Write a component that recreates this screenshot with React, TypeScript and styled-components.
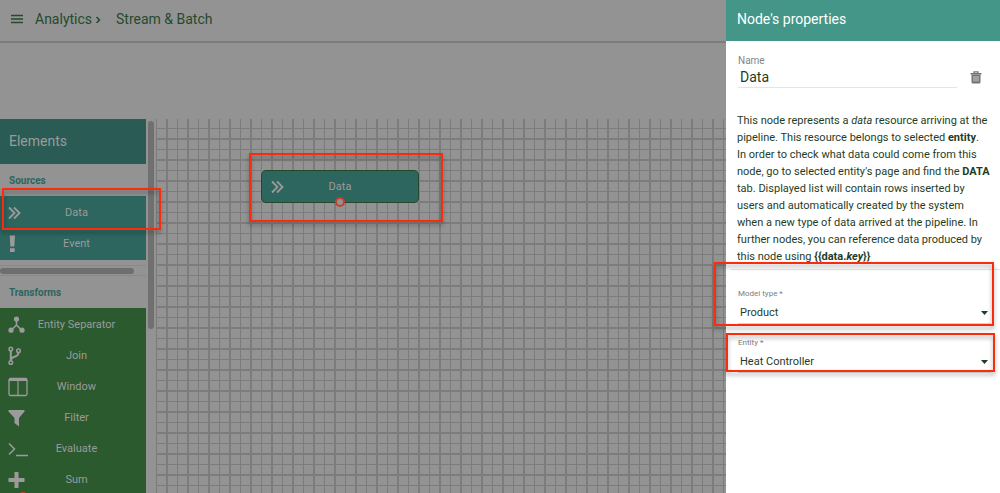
import React, { useState } from "react";
import styled, { createGlobalStyle } from "styled-components";

const GlobalStyle = createGlobalStyle`
  *, *::before, *::after { box-sizing: border-box; }
  body { margin: 0; font-family: Roboto, "Noto Sans", sans-serif; color: #1f3d25; background: #939393; }
  button, input, select { font: inherit; color: inherit; margin: 0; }
  h1, h2, h3, p { margin: 0; font-weight: 400; }
`;

const Shell = styled.div`
  position: relative;
  display: flex;
  flex-direction: column;
  height: 100vh;
  overflow: hidden;
  background: #939393;
`;

const TopBar = styled.header`
  display: flex;
  align-items: center;
  flex: none;
  height: 43px;
  padding: 0 11px 4px;
  border-bottom: 2px solid #7d7d7d;
  color: #264a2c;
`;

const MenuButton = styled.button`
  display: flex;
  padding: 0;
  margin-right: 12px;
  border: 0;
  background: none;
`;

const Crumb = styled.a`
  display: flex;
  align-items: center;
  gap: 3px;
  margin-right: 15px;
  font-size: 14px;
  line-height: 20px;
  color: inherit;
  text-decoration: none;
`;

const PageTitle = styled.h1`
  font-size: 14px;
  line-height: 20px;
`;

const Workspace = styled.main`
  display: flex;
  flex: 1;
  min-height: 0;
  margin-top: 76px;
`;

const Palette = styled.aside`
  display: flex;
  flex: none;
  width: 156px;
  overflow: hidden;
`;

const PaletteBody = styled.div`
  flex: none;
  width: 146px;
`;

const PaletteTitle = styled.h2`
  height: 45px;
  padding-left: 9px;
  font-size: 14px;
  line-height: 45px;
  color: #9b9b9b;
  background: #2a5c55;
`;

const GroupTitle = styled.h3`
  height: 32px;
  padding-left: 9px;
  font-size: 10px;
  font-weight: 700;
  line-height: 33px;
  color: #2b655c;
`;

const GroupItems = styled.div<{ $color: string }>`
  display: flex;
  flex-direction: column;
  padding: 1px 0;
  background: ${(p) => p.$color};
`;

const ElementButton = styled.button`
  display: grid;
  grid-template-columns: 22px 1fr 23px;
  align-items: center;
  height: 31px;
  padding: 0 0 0 8px;
  border: 0;
  background: none;
  color: #9b9b9b;
  font-size: 11px;
  line-height: 16px;
  text-align: center;
  white-space: nowrap;

  svg { display: block; }
`;

const HorizontalTrack = styled.div`
  height: 11px;
  margin-top: 5px;
  padding-top: 2px;
  border: solid #898989;
  border-width: 1px 0;
`;

const HorizontalThumb = styled.div`
  width: 134px;
  height: 6px;
  border-radius: 3px;
  background: #6e6e6e;
`;

const VerticalThumb = styled.div`
  width: 6px;
  height: 208px;
  margin: 2px 0 0 2px;
  border-radius: 3px;
  background: #707070;
`;

const Canvas = styled.section`
  position: relative;
  flex: 1;
  overflow: hidden;
  background-image:
    linear-gradient(90deg, #7c7c7c 1px, transparent 1px 10px, #7c7c7c 10px 12px, transparent 12px),
    linear-gradient(transparent 9px, #7c7c7c 9px 10px, transparent 10px 19px, #7c7c7c 19px);
  background-size: 21px 21px;
`;

const FlowNode = styled.div<{ $x: number; $y: number }>`
  position: absolute;
  left: ${(p) => p.$x}px;
  top: ${(p) => p.$y}px;
  display: grid;
  grid-template-columns: 18px 1fr 18px;
  align-items: center;
  width: 158px;
  height: 33px;
  padding: 0 9px;
  border: 1px solid #23482a;
  border-radius: 5px;
  background: #2d655f;
  color: #9b9b9b;
  font-size: 11px;
  line-height: 16px;
  text-align: center;

  svg { display: block; }
`;

const Port = styled.span`
  position: absolute;
  left: 50%;
  bottom: -5px;
  width: 10px;
  height: 10px;
  transform: translateX(-50%);
  border: 2px solid #c43f2e;
  border-radius: 50%;
  background: #939393;
`;

const Drawer = styled.aside`
  position: absolute;
  top: 0;
  right: 0;
  bottom: 0;
  width: 274px;
  background: #fff;
`;

const DrawerTitle = styled.h2`
  height: 41px;
  padding-left: 11px;
  font-size: 14px;
  line-height: 39px;
  color: #fff;
  background: #449688;
`;

const NameRow = styled.div`
  display: flex;
  align-items: flex-end;
  gap: 13px;
  padding: 12px 18px 0 12px;
`;

const NameField = styled.div`
  display: flex;
  flex: 1;
  flex-direction: column;
  min-width: 0;
`;

const NameLabel = styled.label`
  font-size: 10px;
  line-height: 16px;
  color: #858585;
`;

const NameInput = styled.input`
  width: 100%;
  height: 19px;
  padding: 0 0 2px 2px;
  border: 0;
  border-bottom: 1px solid #e4e4e4;
  outline: 0;
  background: none;
  font-size: 14px;
  line-height: 16px;
`;

const IconButton = styled.button`
  display: flex;
  padding: 0 0 4px;
  border: 0;
  background: none;
`;

const Description = styled.p`
  padding: 24px 10px 4px 11px;
  font-size: 11px;
  line-height: 17px;
`;

const Fields = styled.div`
  display: flex;
  flex-direction: column;
  gap: 13px;
  margin-left: 5px;
  padding: 18px 9px 0 7px;
  border-top: 1px solid #e6e6e6;
`;

const SelectField = styled.div`
  position: relative;
  display: flex;
  flex-direction: column;

  svg { position: absolute; right: 3px; bottom: 9px; pointer-events: none; }
`;

const SelectLabel = styled.label`
  font-size: 8px;
  line-height: 12px;
  color: #7d7d7d;
`;

const Select = styled.select`
  appearance: none;
  height: 24px;
  padding: 2px 16px 0 2px;
  border: 0;
  border-bottom: 1px solid #d8d8d8;
  border-radius: 0;
  outline: 0;
  background: none;
  font-size: 11px;
`;

const Highlight = styled.div<{ $top: number; $left?: number; $right?: number; $width: number; $height: number }>`
  position: absolute;
  top: ${(p) => p.$top}px;
  ${(p) => (p.$right !== undefined ? `right: ${p.$right}px;` : `left: ${p.$left}px;`)}
  width: ${(p) => p.$width}px;
  height: ${(p) => p.$height}px;
  border: 2px solid #fb2c0c;
  filter: drop-shadow(0 3px 2px rgba(0, 0, 0, 0.35));
  pointer-events: none;
`;

const PendingPort = styled.span`
  position: absolute;
  left: 17px;
  bottom: -11px;
  width: 12px;
  height: 12px;
  border-radius: 50%;
  background: #c43f2e;
`;

type IconName = "chevrons" | "bang" | "separator" | "branch" | "window" | "filter" | "prompt" | "plus";

const shapes: Record<IconName, React.ReactNode> = {
  chevrons: <path d="M1 4.500 6.500 10 1 15.500M6 4.500 11.500 10 6 15.500" fill="none" stroke="currentColor" strokeWidth="1.800" />,
  bang: <path d="M1.700 1.500h5.300l-.7 11H2.400zM2 14.200h4.700v3.800H2z" />,
  separator: (
    <>
      <path d="M8.500 4v7M8.500 10 3 15.500M8.500 10l5.500 5.500" fill="none" stroke="currentColor" strokeWidth="1.600" />
      <circle cx="8.500" cy="4" r="2.600" />
      <circle cx="3" cy="15.200" r="2.600" />
      <circle cx="14" cy="15.200" r="2.600" />
    </>
  ),
  branch: (
    <g fill="none" stroke="currentColor" strokeWidth="1.500">
      <circle cx="2.800" cy="3" r="1.800" />
      <circle cx="2.800" cy="16.500" r="1.800" />
      <circle cx="10.500" cy="4.800" r="1.800" />
      <path d="M2.800 4.800v9.900M10.500 6.600c0 3.200-2.500 3.700-4.500 4.400-2 .7-3.200 1.500-3.200 3.400" strokeWidth="2" />
    </g>
  ),
  window: (
    <>
      <rect x="1" y="1.500" width="18" height="17" rx="1.500" fill="none" stroke="currentColor" strokeWidth="1.300" />
      <path d="M1 1.500h18v2.500H1z" />
      <path d="M10 4v14.500" fill="none" stroke="currentColor" strokeWidth="1.200" />
    </>
  ),
  filter: <path d="M.5 2h16v1.500L11 10v8.500L6.500 15v-5L.5 3.500z" />,
  prompt: <path d="M1 4.500 6.500 10 1 15.500M8 16.500h12" fill="none" stroke="currentColor" strokeWidth="1.500" />,
  plus: <path d="M6.500 2h4v6h6v4h-6v6h-4v-6h-6V8h6z" />,
};

const Icon = ({ name }: { name: IconName }) => (
  <svg width="20" height="20" viewBox="0 0 20 20" fill="currentColor" aria-hidden="true">
    {shapes[name]}
  </svg>
);

const Caret = () => (
  <svg width="7" height="4" viewBox="0 0 7 4" fill="#1f3d25" aria-hidden="true">
    <path d="M0 0h7L3.500 4z" />
  </svg>
);

const sources: { label: string; icon: IconName }[] = [
  { label: "Data", icon: "chevrons" },
  { label: "Event", icon: "bang" },
];

const transforms: { label: string; icon: IconName }[] = [
  { label: "Entity Separator", icon: "separator" },
  { label: "Join", icon: "branch" },
  { label: "Window", icon: "window" },
  { label: "Filter", icon: "filter" },
  { label: "Evaluate", icon: "prompt" },
  { label: "Sum", icon: "plus" },
];

export default function App() {
  const [name, setName] = useState("Data");

  return (
    <>
      <GlobalStyle />
      <Shell>
        <TopBar>
          <MenuButton aria-label="Menu">
            <svg width="12" height="10" viewBox="0 0 12 10" stroke="currentColor" strokeWidth="1.500" aria-hidden="true">
              <path d="M0 1.500h12M0 5h12M0 8.500h12" />
            </svg>
          </MenuButton>
          <Crumb href="#analytics">
            Analytics
            <svg width="6" height="8" viewBox="0 0 6 8" fill="none" stroke="currentColor" strokeWidth="1.500" aria-hidden="true">
              <path d="M1.500 2 4.500 5l-3 3" />
            </svg>
          </Crumb>
          <PageTitle>Stream &amp; Batch</PageTitle>
        </TopBar>

        <Workspace>
          <Palette>
            <PaletteBody>
              <PaletteTitle>Elements</PaletteTitle>
              <GroupTitle>Sources</GroupTitle>
              <GroupItems $color="#2d655f">
                {sources.map((item) => (
                  <ElementButton key={item.label}>
                    <Icon name={item.icon} />
                    {item.label}
                  </ElementButton>
                ))}
              </GroupItems>
              <HorizontalTrack>
                <HorizontalThumb />
              </HorizontalTrack>
              <GroupTitle>Transforms</GroupTitle>
              <GroupItems $color="#2b5a2e">
                {transforms.map((item) => (
                  <ElementButton key={item.label}>
                    <Icon name={item.icon} />
                    {item.label}
                  </ElementButton>
                ))}
              </GroupItems>
            </PaletteBody>
            <VerticalThumb />
          </Palette>
          <Canvas>
            <FlowNode $x={105} $y={51}>
              <Icon name="chevrons" />
              Data
              <Port />
            </FlowNode>
          </Canvas>
        </Workspace>

        <PendingPort />

        <Drawer>
          <DrawerTitle>Node's properties</DrawerTitle>
          <NameRow>
            <NameField>
              <NameLabel htmlFor="node-name">Name</NameLabel>
              <NameInput id="node-name" value={name} onChange={(e) => setName(e.target.value)} />
            </NameField>
            <IconButton aria-label="Delete node">
              <svg width="12" height="13" viewBox="0 0 12 13" aria-hidden="true">
                <path d="M4 2V.8h4V2" fill="none" stroke="#757575" strokeWidth="1.200" />
                <path d="M.5 2h11v1.500H.5z" fill="#757575" />
                <path d="M1.500 3.500h9V11a1.500 1.500 0 0 1-1.500 1.500H3A1.500 1.500 0 0 1 1.500 11z" fill="#757575" />
                <path d="M4 5v5.500M6 5v5.500M8 5v5.500" stroke="#e4e4e4" strokeWidth=".8" />
              </svg>
            </IconButton>
          </NameRow>
          <Description>
            This node represents a <em>data</em> resource arriving at the pipeline. This resource belongs to selected{" "}
            <b>entity</b>. In order to check what data could come from this node, go to selected entity's page and find
            the <b>DATA</b> tab. Displayed list will contain rows inserted by users and automatically created by the
            system when a new type of data arrived at the pipeline. In further nodes, you can reference data produced by
            this node using <b>{"{{data."}<em>key</em>{"}}"}</b>
          </Description>
          <Fields>
            <SelectField>
              <SelectLabel htmlFor="model-type">Model type *</SelectLabel>
              <Select id="model-type" defaultValue="Product">
                <option>Product</option>
              </Select>
              <Caret />
            </SelectField>
            <SelectField>
              <SelectLabel htmlFor="entity">Entity *</SelectLabel>
              <Select id="entity" defaultValue="Heat Controller">
                <option>Heat Controller</option>
              </Select>
              <Caret />
            </SelectField>
          </Fields>
        </Drawer>

        <Highlight $top={188} $left={2} $width={159} $height={42} />
        <Highlight $top={153} $left={249} $width={194} $height={69} />
        <Highlight $top={262} $right={6} $width={280} $height={64} />
        <Highlight $top={333} $right={5} $width={269} $height={39} />
      </Shell>
    </>
  );
}
